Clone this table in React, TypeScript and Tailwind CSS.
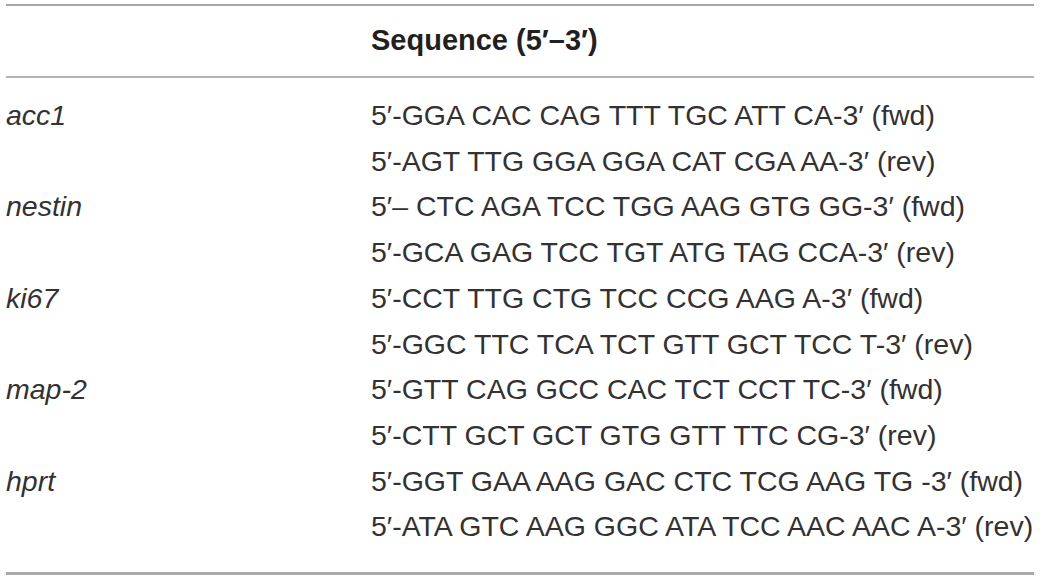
import { Fragment } from 'react';

const rows: { gene: string; fwd: string; rev: string }[] = [
  {
    gene: 'acc1',
    fwd: '5′-GGA CAC CAG TTT TGC ATT CA-3′ (fwd)',
    rev: '5′-AGT TTG GGA GGA CAT CGA AA-3′ (rev)',
  },
  {
    gene: 'nestin',
    fwd: '5′– CTC AGA TCC TGG AAG GTG GG-3′ (fwd)',
    rev: '5′-GCA GAG TCC TGT ATG TAG CCA-3′ (rev)',
  },
  {
    gene: 'ki67',
    fwd: '5′-CCT TTG CTG TCC CCG AAG A-3′ (fwd)',
    rev: '5′-GGC TTC TCA TCT GTT GCT TCC T-3′ (rev)',
  },
  {
    gene: 'map-2',
    fwd: '5′-GTT CAG GCC CAC TCT CCT TC-3′ (fwd)',
    rev: '5′-CTT GCT GCT GTG GTT TTC CG-3′ (rev)',
  },
  {
    gene: 'hprt',
    fwd: '5′-GGT GAA AAG GAC CTC TCG AAG TG -3′ (fwd)',
    rev: '5′-ATA GTC AAG GGC ATA TCC AAC AAC A-3′ (rev)',
  },
];

export default function App() {
  return (
    <div className="h-[580px] w-[1040px] bg-white px-[6px] pt-[4px] font-['Liberation_Sans',Arial,sans-serif] text-[28.5px] text-[#333132]">
      <div className="border-t-2 border-[#a7a7a7]">
        {/* header */}
        <div className="grid h-[72px] grid-cols-[365px_1fr] items-center border-b-2 border-[#b3b3b3]">
          <div />
          <div className="font-bold text-[29px] text-[#231f20]">Sequence (5′–3′)</div>
        </div>

        {/* primer rows */}
        <div className="grid grid-cols-[365px_1fr] pt-[15px] pb-[22px] leading-[45.7px]">
          {rows.map((r) => (
            <Fragment key={r.gene}>
              <div className="italic">{r.gene}</div>
              <div>{r.fwd}</div>
              <div />
              <div>{r.rev}</div>
            </Fragment>
          ))}
        </div>
        <div className="border-t-[3px] border-[#a9a9a9]" />
      </div>
    </div>
  );
}
